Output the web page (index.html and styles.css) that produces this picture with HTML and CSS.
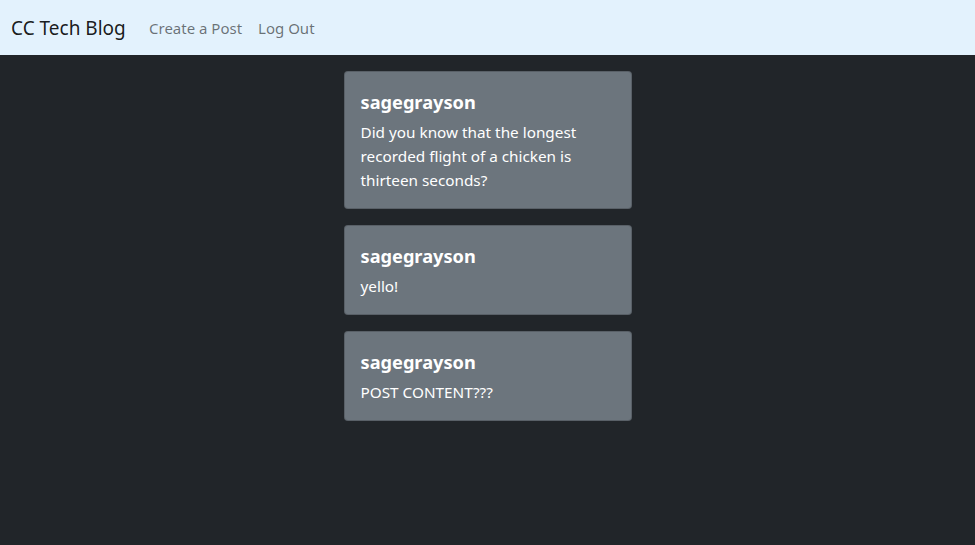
FILE: index.html
```html
<!DOCTYPE html>
<html lang="en">
<head>
<meta charset="utf-8">
<title>CC Tech Blog</title>
<link rel="stylesheet" href="styles.css">
</head>
<body>
<nav class="navbar">
  <a class="brand" href="#">CC Tech Blog</a>
  <ul class="nav">
    <li><a class="nav-link" href="#">Create a Post</a></li>
    <li><a class="nav-link" href="#">Log Out</a></li>
  </ul>
</nav>
<main class="posts">
  <div class="card">
    <h5 class="card-title">sagegrayson</h5>
    <p class="card-text">Did you know that the longest recorded flight of a chicken is thirteen seconds?</p>
  </div>
  <div class="card">
    <h5 class="card-title">sagegrayson</h5>
    <p class="card-text">yello!</p>
  </div>
  <div class="card">
    <h5 class="card-title">sagegrayson</h5>
    <p class="card-text">POST CONTENT???</p>
  </div>
</main>
</body>
</html>
```
FILE: styles.css
```css
* { box-sizing: border-box; }
html, body { margin: 0; padding: 0; }
body {
  background: #212529;
  font-family: "Noto Sans", "Open Sans", sans-serif;
  font-size: 15px;
  line-height: 24px;
  color: #f8f9fa;
  min-height: 545px;
}
.navbar {
  background: #e3f2fd;
  height: 55px;
  display: flex;
  align-items: center;
  padding: 0 12px 0 11px;
}
.brand {
  color: rgba(0,0,0,.9);
  text-decoration: none;
  font-size: 19px;
  line-height: 30px;
  margin-right: 16px;
  width: 114px;
  white-space: nowrap;
}
.nav {
  list-style: none;
  margin: 0;
  padding: 0;
  display: flex;
}
.nav-link {
  display: block;
  padding: 8px;
  color: rgba(0,0,0,.55);
  text-decoration: none;
  font-size: 15px;
  line-height: 24px;
}
.posts {
  display: flex;
  flex-direction: column;
  align-items: center;
  gap: 16px;
  padding-top: 16px;
}
.card {
  width: 288px;
  background: #6c757d;
  border: 1px solid rgba(0,0,0,.175);
  border-radius: 4px;
  padding: 16px;
}
.card-title {
  margin: 0 0 6px;
  padding-top: 2px;
  font-size: 18.2px;
  font-weight: 700;
  line-height: 24px;
  color: #fff;
}
.card-text {
  margin: 0;
  font-size: 15.3px;
  line-height: 24px;
  color: #fff;
}
```
